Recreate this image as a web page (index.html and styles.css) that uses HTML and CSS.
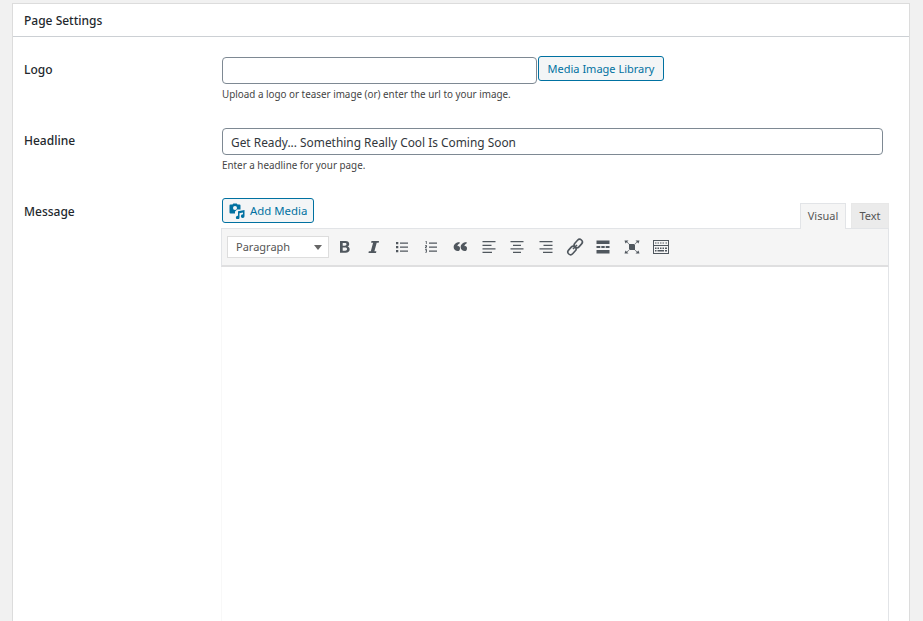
FILE: index.html
```html
<!DOCTYPE html>
<html lang="en">
<head>
<meta charset="utf-8">
<title>Page Settings</title>
<link rel="stylesheet" href="styles.css">
</head>
<body>
<section class="panel">
  <h2 class="panel-title">Page Settings</h2>
  <div class="rows">
    <div class="row row-logo">
      <div class="label">Logo</div>
      <div class="field">
        <div class="inline">
          <input class="input input-logo" type="text">
          <button class="btn btn-library" type="button">Media Image Library</button>
        </div>
        <p class="hint">Upload a logo or teaser image (or) enter the url to your image.</p>
      </div>
    </div>
    <div class="row row-headline">
      <div class="label">Headline</div>
      <div class="field">
        <input class="input input-headline" type="text" value="Get Ready... Something Really Cool Is Coming Soon">
        <p class="hint">Enter a headline for your page.</p>
      </div>
    </div>
    <div class="row row-message">
      <div class="label label-message">Message</div>
      <div class="field editor">
        <div class="editor-top">
          <button class="btn btn-media" type="button">
            <svg class="media-icon" viewBox="0 0 16 16" width="16" height="16"><path fill="#0071a1" d="M1.500 1.500h2l.8-1h3.400l.8 1h2a1 1 0 0 1 1 1v4H8.200L6 8.600v1.900H1.500a1 1 0 0 1-1-1v-7a1 1 0 0 1 1-1z"/><circle cx="6" cy="5" r="2" fill="#f3f5f6"/><path fill="#0071a1" d="M15.500 7v6.200a1.800 1.800 0 1 1-1.500-1.800V9.500l-3.500.7v4.300a1.800 1.800 0 1 1-1.500-1.800V8.200z"/></svg>
            <span>Add Media</span>
          </button>
          <div class="tabs">
            <span class="tab tab-active">Visual</span>
            <span class="tab">Text</span>
          </div>
        </div>
        <div class="toolbar">
          <div class="select"><span class="select-text">Paragraph</span><i class="caret"></i></div>
          <svg class="tool" viewBox="0 0 20 20"><path fill-rule="evenodd" d="M5 4h5.500c2.400 0 3.700 1 3.700 2.900 0 1.300-.7 2.200-1.800 2.600 1.400.3 2.300 1.300 2.300 2.800 0 2.200-1.600 3.400-4.100 3.400H5zm2.700 2v2.700h2.200c1 0 1.600-.5 1.600-1.400S10.900 6 9.900 6zm0 4.600v3.100h2.500c1.200 0 1.800-.6 1.800-1.600s-.6-1.500-1.800-1.500z"/></svg>
          <svg class="tool" viewBox="0 0 20 20"><path d="M7.500 4H15l-.3 1.700h-2L10.400 14.300h2L12 16H4.500l.3-1.700h2L9.100 5.700h-2z"/></svg>
          <svg class="tool" viewBox="0 0 20 20"><path d="M4 5h2.300v2.300H4zM8 5.500h8v1.200H8zM4 9h2.300v2.300H4zM8 9.500h8v1.200H8zM4 13h2.300v2.300H4zM8 13.500h8v1.200H8z"/></svg>
          <svg class="tool" viewBox="0 0 20 20"><path d="M8 5.500h8v1.200H8zM8 9.500h8v1.200H8zM8 13.500h8v1.200H8zM4.500 4h1.200v3h-.8V4.700h-.4zM4 8.300h2v1.500l-1 .9h1v.6H4V10l1.200-1H4zM4 12.300h2v3.200H4v-.6h1.200v-.7h-.8v-.6h.8v-.7H4z"/></svg>
          <svg class="tool" viewBox="0 0 20 20"><path d="M9.600 5v1.600C8.200 7.200 7.400 8.200 7.400 9.300c.3-.1.500-.2.8-.2 1.100 0 1.800.9 1.800 2.300 0 1.600-.9 2.600-2.300 2.600C5.900 14 3.600 12.500 3.600 10c0-2.700 2.100-4.500 6-5zM16.600 5v1.600c-1.400.6-2.200 1.600-2.200 2.700.3-.1.500-.2.800-.2 1.100 0 1.800.9 1.800 2.300 0 1.600-.9 2.600-2.300 2.600-1.800 0-4.100-1.500-4.100-4 0-2.700 2.100-4.500 6-5z"/></svg>
          <svg class="tool" viewBox="0 0 20 20"><path d="M3.500 4h13v1.300h-13zM3.500 7.700h9V9h-9zM3.500 11.300h13v1.300h-13zM3.500 14.700h9.500V16H3.500z"/></svg>
          <svg class="tool" viewBox="0 0 20 20"><path d="M3.500 4h13v1.300h-13zM6 7.700h8V9H6zM3.500 11.300h13v1.300h-13zM6 14.700h8V16H6z"/></svg>
          <svg class="tool" viewBox="0 0 20 20"><path d="M3.500 4h13v1.300h-13zM7.500 7.700h9V9h-9zM3.500 11.300h13v1.300h-13zM7 14.700h9.500V16H7z"/></svg>
          <svg class="tool" viewBox="0 0 20 20"><g class="stroke" fill="none" stroke-width="1.600"><rect x="10.500" y="1.800" width="5.500" height="9.500" rx="2.750" transform="rotate(42 13.250 6.550)"/><rect x="4.200" y="8.700" width="5.500" height="9.500" rx="2.750" transform="rotate(42 6.950 13.450)"/><path d="M8 12l4-4"/></g></svg>
          <svg class="tool" viewBox="0 0 20 20"><path d="M3.500 3.500h13V7h-13zM3.500 9h3.800v2H3.500zM8.300 9h3.400v2H8.300zM12.700 9h3.800v2h-3.800zM3.500 13h13v3.500h-13z"/></svg>
          <svg class="tool" viewBox="0 0 20 20"><path d="M7 7h6v6H7zM2.500 3.500h4L5.200 4.800 7.800 7.400l-.4.400L4.800 5.200 3.500 6.500zM17.500 3.500h-4l1.300 1.300-2.600 2.600.4.400 2.600-2.600 1.300 1.300zM2.500 16.500h4l-1.300-1.300 2.600-2.600-.4-.4-2.600 2.600-1.300-1.300zM17.500 16.500h-4l1.300-1.300-2.600-2.600.4-.4 2.600 2.600 1.300-1.300z"/></svg>
          <svg class="tool tool-kb" viewBox="0 0 20 20"><path fill-rule="evenodd" d="M2 3h16v14H2zm1 1v4h14V4zm0 5v7h14V9z"/><path d="M4 5.500h1.500v1H4zM6.500 5.500H8v1H6.500zM9 5.500h1.500v1H9zM11.500 5.500H13v1h-1.500zM14.500 5.500H16v1h-1.500zM4 10.500h1.500V12H4zM6.500 10.500H8V12H6.500zM9 10.500h1.500V12H9zM11.500 10.500H13V12h-1.500zM14 10.500h2V12h-2zM4 13h1.500v1.500H4zM6.500 13H13v1.500H6.500zM14 13h2v1.500h-2z"/></svg>
        </div>
        <div class="editor-area"></div>
      </div>
    </div>
  </div>
</section>
</body>
</html>
```
FILE: styles.css
```css
* { box-sizing: border-box; }
html, body { height: 100%; overflow: hidden; }
body {
  margin: 0;
  padding: 3px 13px 0 12px;
  background: #f1f1f1;
  font-family: "Noto Sans", "Open Sans", sans-serif;
  font-size: 12px;
  color: #23282d;
}
.panel {
  height: 900px;
  background: #fff;
  border: 1px solid #dcdcdc;
}
.panel-title {
  margin: 0;
  height: 33px;
  padding: 8px 11px 0;
  font-size: 12px;
  line-height: 17px;
  font-weight: 500;
  color: #23282d;
  border-bottom: 1px solid #ccd0d4;
}
.rows { padding: 20px 0 0 11px; }
.row { display: flex; }
.row-logo { height: 71px; }
.row-headline { height: 70px; }
.label {
  width: 198px;
  flex: none;
  font-size: 12px;
  line-height: 18px;
  padding-top: 4px;
  font-weight: 500;
  color: #23282d;
}
.label-message { padding-top: 5px; }
.field { flex: none; width: 667px; }
.inline { display: flex; align-items: flex-start; }
.input {
  display: block;
  height: 27px;
  padding: 1px 8px 0;
  border: 1px solid #7e8993;
  border-radius: 4px;
  background: #fff;
  font: 11.900px/24px "Noto Sans", sans-serif;
  color: #32373c;
  outline: none;
}
.input-logo { width: 315px; }
.input-headline { width: 661px; }
.btn {
  display: inline-flex;
  align-items: center;
  height: 25px;
  padding: 0 10px;
  border: 1px solid #0071a1;
  border-radius: 3px;
  background: #f3f5f6;
  color: #0071a1;
  font: 11px/23px "Noto Sans", sans-serif;
  white-space: nowrap;
}
.btn-library { margin: -1px 0 0 1px; width: 126px; justify-content: center; padding: 0; }
.hint {
  margin: 3px 0 0;
  font-size: 9.860px;
  line-height: 14px;
  color: #444;
}
.editor-top {
  display: flex;
  justify-content: space-between;
  align-items: flex-end;
  width: 667px;
  height: 30px;
}
.btn-media { align-self: flex-start; height: 25px; padding: 0 6px; gap: 5px; width: 92px; font-size: 11.400px; }
.media-icon { flex: none; }
.tabs { display: flex; gap: 5px; position: relative; z-index: 1; }
.tab {
  height: 25px;
  width: 38px;
  text-align: center;
  background: #ebebeb;
  border: 1px solid #e8e8e8;
  border-bottom: 0;
  font-size: 11px;
  line-height: 24px;
  color: #555;
}
.tab-active { width: 46px; background: #f5f5f5; border-color: #e2e4e7; height: 26px; margin-bottom: -1px; }
.toolbar {
  display: flex;
  align-items: center;
  gap: 8.730px;
  height: 39px;
  margin-left: -1px;
  padding: 0 0 0 5px;
  background: #f5f5f5;
  border: 1px solid #e2e4e7;
  border-bottom: 2px solid #dfdfe0;
  width: 668px;
}
.select {
  display: flex;
  justify-content: space-between;
  align-items: center;
  width: 102px;
  height: 22px;
  padding: 0 6px 0 8px;
  margin-right: -2.730px;
  background: #fff;
  border: 1px solid #ddd;
  font-size: 11px;
  color: #555;
}
.select-text { margin-top: -2px; }
.caret {
  width: 0; height: 0;
  border-left: 4px solid transparent;
  border-right: 4px solid transparent;
  border-top: 5px solid #666;
}
.tool {
  width: 20px; height: 20px;
  flex: none;
  fill: #50575e;
}
.stroke { stroke: #50575e; }
.editor-area {
  height: 600px;
  width: 668px;
  margin-left: -1px;
  border-left: 1px solid #f8f8f8;
  border-right: 1px solid #e2e4e7;
  background: #fff;
}
```
